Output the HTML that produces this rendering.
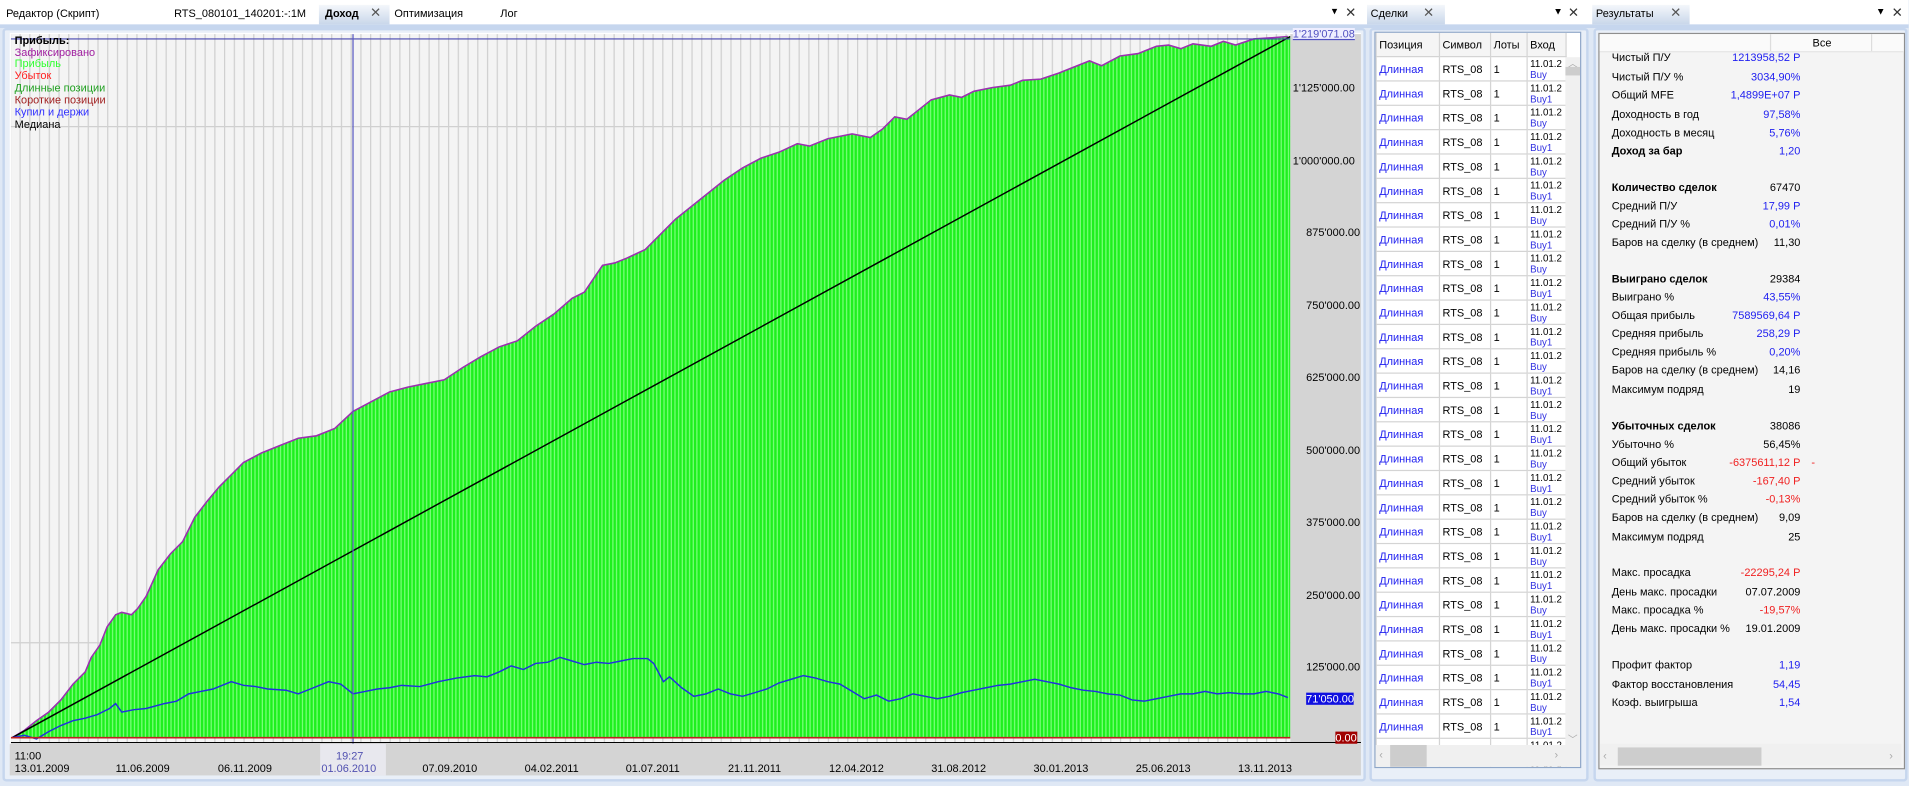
<!DOCTYPE html>
<html><head><meta charset="utf-8">
<style>
html,body{margin:0;padding:0;width:1909px;height:786px;overflow:hidden;background:#dfe8f5;}
#w{position:absolute;left:0;top:0;width:1568px;height:645px;transform:scale(1.2173);transform-origin:0 0;font-family:"Liberation Sans","DejaVu Sans",sans-serif;font-size:9px;color:#000;overflow:hidden;}
.a{position:absolute;white-space:nowrap;}
.tabbar{position:absolute;left:0;top:0;width:1568px;height:20px;background:#fff;border-bottom:3px solid #c6d6ee;}
.panel{position:absolute;background:#e9eff8;border:2px solid #c6d6ee;border-radius:3px;}
.tab{position:absolute;background:linear-gradient(#f4f7fb,#c9d7ea);height:16px;top:4px;}
table{border-collapse:collapse;}
.dt td{border:1px solid #d4d4d4;height:19px;padding:0 0 0 2px;vertical-align:middle;font-size:9px;line-height:10px;}
.dt td.p{color:#2020f0;}
.dt td.e{font-size:8px;line-height:9px;overflow:hidden;}
.dt td.e span{color:#3030e0;}
.r .a{font-size:9px;}
.b{color:#2020f0;}.rd{color:#f02020;}
</style></head><body><div id="w">
<div class="tabbar"></div>
<div class="a" style="left:5px;top:6px">Редактор (Скрипт)</div>
<div class="a" style="left:143px;top:6px">RTS_080101_140201:-:1M</div>
<div class="tab" style="left:262px;width:58px"></div>
<div class="a" style="left:267px;top:6px;font-weight:bold">Доход</div>
<div class="a" style="left:304px;top:4px;color:#555;font-size:11px">✕</div>
<div class="a" style="left:324px;top:6px">Оптимизация</div>
<div class="a" style="left:411px;top:6px">Лог</div>
<div class="a" style="left:1094px;top:4px;font-size:9px">▾</div>
<div class="a" style="left:1105px;top:4px;font-size:11px;color:#333">✕</div>

<div class="panel" style="left:2px;top:23px;width:1116px;height:615px;"></div>
<svg class="a" style="left:0;top:0" width="1120" height="640" viewBox="0 0 1120 640">
<defs>
<pattern id="g" x="8" y="0" width="8" height="10" patternUnits="userSpaceOnUse"><rect width="8" height="10" fill="#f4f4f4"/><rect x="0" width="1" height="10" fill="#cfcfcf"/></pattern>
<pattern id="gr" x="0" y="0" width="3" height="10" patternUnits="userSpaceOnUse"><rect width="3" height="10" fill="#1ef01e"/><rect x="2" width="1" height="10" fill="#7cff7c"/></pattern>
</defs>
<rect x="8" y="27" width="1110" height="585" fill="#fff"/>
<rect x="9" y="28" width="1051" height="582" fill="url(#g)"/>
<line x1="9" y1="104" x2="1060" y2="104" stroke="#d0d0d0"/>
<line x1="9" y1="528" x2="1060" y2="528" stroke="#d0d0d0"/>
<polygon fill="url(#gr)" points="10,606 20,600 30,592 40,585 50,575 60,562 70,552 75,540 82,530 88,515 95,505 100,503 108,505 113,500 120,490 130,468 140,455 150,445 160,425 170,412 180,400 190,390 200,380 215,372 230,366 245,360 260,358 275,352 290,338 305,330 320,322 335,318 350,315 365,312 380,302 395,293 410,285 425,280 440,268 455,258 470,245 480,240 495,218 505,216 515,212 530,205 545,190 555,180 565,172 580,160 595,148 610,138 625,130 640,125 655,118 665,120 680,114 700,110 715,113 725,106 735,96 745,98 755,90 765,82 780,78 790,80 800,75 815,72 830,70 840,66 855,65 870,60 880,56 895,50 905,54 920,46 935,44 950,38 960,37 970,40 980,36 995,38 1005,34 1015,37 1030,32 1045,31 1058,30 1060,30 1060,606"/>
<polyline fill="none" stroke="#9b30b0" stroke-width="1.3" points="10,606 20,600 30,592 40,585 50,575 60,562 70,552 75,540 82,530 88,515 95,505 100,503 108,505 113,500 120,490 130,468 140,455 150,445 160,425 170,412 180,400 190,390 200,380 215,372 230,366 245,360 260,358 275,352 290,338 305,330 320,322 335,318 350,315 365,312 380,302 395,293 410,285 425,280 440,268 455,258 470,245 480,240 495,218 505,216 515,212 530,205 545,190 555,180 565,172 580,160 595,148 610,138 625,130 640,125 655,118 665,120 680,114 700,110 715,113 725,106 735,96 745,98 755,90 765,82 780,78 790,80 800,75 815,72 830,70 840,66 855,65 870,60 880,56 895,50 905,54 920,46 935,44 950,38 960,37 970,40 980,36 995,38 1005,34 1015,37 1030,32 1045,31 1058,30"/>
<line x1="10" y1="606" x2="1060" y2="30" stroke="#000" stroke-width="1.2"/>
<polyline fill="none" stroke="#2030e0" stroke-width="1.2" points="10,606 20,604 30,607 40,601 50,596 60,592 70,590 80,587 90,582 95,578 100,585 110,583 120,582 135,578 145,576 155,570 165,568 175,566 190,560 200,563 210,564 220,566 235,567 245,570 255,566 270,560 280,562 290,570 300,568 310,566 320,565 330,563 345,564 360,560 375,557 390,555 400,556 410,552 420,547 430,550 440,545 450,544 460,540 470,543 480,546 490,544 500,545 510,543 520,541 532,541 537,545 545,560 550,556 560,565 570,572 580,570 590,566 600,570 610,572 620,569 630,566 640,561 650,558 660,555 670,557 680,560 690,562 700,568 710,574 720,571 730,576 740,574 750,570 760,572 770,574 780,572 790,569 800,567 810,565 820,563 830,562 840,560 850,558 860,560 870,562 880,565 890,567 900,568 910,570 920,571 930,575 940,576 950,574 960,572 970,570 980,570 990,568 1000,570 1010,569 1020,570 1030,570 1040,568 1050,570 1058,573"/>
<line x1="9" y1="32" x2="1060" y2="32" stroke="#4848b0"/>
<line x1="290" y1="28" x2="290" y2="612" stroke="#5858c0"/>
<line x1="9" y1="606" x2="1060" y2="606" stroke="#c02020" stroke-width="1.3"/>
<rect x="1060" y="28" width="58" height="582" fill="#d4d4d4"/>
<line x1="9" y1="610" x2="1118" y2="610" stroke="#000"/>
<rect x="8" y="611" width="1110" height="26" fill="#d4d4d4"/>
<rect x="263" y="611" width="54" height="26" fill="#e8e8ee"/>
</svg>
<div class="a" style="left:12px;top:28px;font-weight:bold">Прибыль:</div>
<div class="a" style="left:12px;top:38px;color:#a020a0">Зафиксировано</div>
<div class="a" style="left:12px;top:47px;color:#30ff30">Прибыль</div>
<div class="a" style="left:12px;top:57px;color:#ff2020">Убыток</div>
<div class="a" style="left:12px;top:67px;color:#20a020">Длинные позиции</div>
<div class="a" style="left:12px;top:77px;color:#a02020">Короткие позиции</div>
<div class="a" style="left:12px;top:87px;color:#3030ff">Купил и держи</div>
<div class="a" style="left:12px;top:97px;color:#000">Медиана</div>
<div class="a" style="left:1062px;top:23px;color:#5050c0;text-decoration:underline;background:#eef">1'219'071.08</div>
<div class="a" style="left:1062px;top:67px">1'125'000.00</div>
<div class="a" style="left:1062px;top:127px">1'000'000.00</div>
<div class="a" style="left:1073px;top:186px">875'000.00</div>
<div class="a" style="left:1073px;top:246px">750'000.00</div>
<div class="a" style="left:1073px;top:305px">625'000.00</div>
<div class="a" style="left:1073px;top:365px">500'000.00</div>
<div class="a" style="left:1073px;top:424px">375'000.00</div>
<div class="a" style="left:1073px;top:484px">250'000.00</div>
<div class="a" style="left:1073px;top:543px">125'000.00</div>
<div class="a" style="left:1073px;top:569px;background:#1010e0;color:#fff">71'050.00</div>
<div class="a" style="left:1097px;top:601px;background:#a00000;color:#fff">0.00</div>
<div class="a" style="left:12px;top:616px">11:00</div>
<div class="a" style="left:276px;top:616px;color:#5050b0">19:27</div>
<div class="a" style="left:12px;top:626px">13.01.2009</div>
<div class="a" style="left:95px;top:626px">11.06.2009</div>
<div class="a" style="left:179px;top:626px">06.11.2009</div>
<div class="a" style="left:264px;top:626px;color:#5050b0">01.06.2010</div>
<div class="a" style="left:347px;top:626px">07.09.2010</div>
<div class="a" style="left:431px;top:626px">04.02.2011</div>
<div class="a" style="left:514px;top:626px">01.07.2011</div>
<div class="a" style="left:598px;top:626px">21.11.2011</div>
<div class="a" style="left:681px;top:626px">12.04.2012</div>
<div class="a" style="left:765px;top:626px">31.08.2012</div>
<div class="a" style="left:849px;top:626px">30.01.2013</div>
<div class="a" style="left:933px;top:626px">25.06.2013</div>
<div class="a" style="left:1017px;top:626px">13.11.2013</div>

<div class="tab" style="left:1123px;width:64px"></div>
<div class="a" style="left:1126px;top:6px">Сделки</div>
<div class="a" style="left:1169px;top:4px;color:#555;font-size:11px">✕</div>
<div class="a" style="left:1276px;top:5px;font-size:8px">▼</div>
<div class="a" style="left:1288px;top:4px;font-size:11px;color:#333">✕</div>
<div class="panel" style="left:1125px;top:23px;width:176px;height:615px;"></div>
<div class="a" style="left:1129px;top:26px;width:168px;height:603px;background:#fff;border:1px solid #8ea6c8;overflow:hidden">
<table class="dt" style="width:156px;table-layout:fixed">
<col style="width:52px"><col style="width:42px"><col style="width:30px"><col style="width:32px">
<tr><td style="background:#f5f5f5;border-top:0">Позиция</td><td style="background:#f5f5f5;border-top:0">Символ</td><td style="background:#f5f5f5;border-top:0">Лоты</td><td style="background:#f5f5f5;border-top:0">Вход</td></tr>
<tr><td class="p">Длинная</td><td>RTS_08</td><td>1</td><td class="e">11.01.2<br><span>Buy</span></td></tr>
<tr><td class="p">Длинная</td><td>RTS_08</td><td>1</td><td class="e">11.01.2<br><span>Buy1</span></td></tr>
<tr><td class="p">Длинная</td><td>RTS_08</td><td>1</td><td class="e">11.01.2<br><span>Buy</span></td></tr>
<tr><td class="p">Длинная</td><td>RTS_08</td><td>1</td><td class="e">11.01.2<br><span>Buy1</span></td></tr>
<tr><td class="p">Длинная</td><td>RTS_08</td><td>1</td><td class="e">11.01.2<br><span>Buy</span></td></tr>
<tr><td class="p">Длинная</td><td>RTS_08</td><td>1</td><td class="e">11.01.2<br><span>Buy1</span></td></tr>
<tr><td class="p">Длинная</td><td>RTS_08</td><td>1</td><td class="e">11.01.2<br><span>Buy</span></td></tr>
<tr><td class="p">Длинная</td><td>RTS_08</td><td>1</td><td class="e">11.01.2<br><span>Buy1</span></td></tr>
<tr><td class="p">Длинная</td><td>RTS_08</td><td>1</td><td class="e">11.01.2<br><span>Buy</span></td></tr>
<tr><td class="p">Длинная</td><td>RTS_08</td><td>1</td><td class="e">11.01.2<br><span>Buy1</span></td></tr>
<tr><td class="p">Длинная</td><td>RTS_08</td><td>1</td><td class="e">11.01.2<br><span>Buy</span></td></tr>
<tr><td class="p">Длинная</td><td>RTS_08</td><td>1</td><td class="e">11.01.2<br><span>Buy1</span></td></tr>
<tr><td class="p">Длинная</td><td>RTS_08</td><td>1</td><td class="e">11.01.2<br><span>Buy</span></td></tr>
<tr><td class="p">Длинная</td><td>RTS_08</td><td>1</td><td class="e">11.01.2<br><span>Buy1</span></td></tr>
<tr><td class="p">Длинная</td><td>RTS_08</td><td>1</td><td class="e">11.01.2<br><span>Buy</span></td></tr>
<tr><td class="p">Длинная</td><td>RTS_08</td><td>1</td><td class="e">11.01.2<br><span>Buy1</span></td></tr>
<tr><td class="p">Длинная</td><td>RTS_08</td><td>1</td><td class="e">11.01.2<br><span>Buy</span></td></tr>
<tr><td class="p">Длинная</td><td>RTS_08</td><td>1</td><td class="e">11.01.2<br><span>Buy1</span></td></tr>
<tr><td class="p">Длинная</td><td>RTS_08</td><td>1</td><td class="e">11.01.2<br><span>Buy</span></td></tr>
<tr><td class="p">Длинная</td><td>RTS_08</td><td>1</td><td class="e">11.01.2<br><span>Buy1</span></td></tr>
<tr><td class="p">Длинная</td><td>RTS_08</td><td>1</td><td class="e">11.01.2<br><span>Buy</span></td></tr>
<tr><td class="p">Длинная</td><td>RTS_08</td><td>1</td><td class="e">11.01.2<br><span>Buy1</span></td></tr>
<tr><td class="p">Длинная</td><td>RTS_08</td><td>1</td><td class="e">11.01.2<br><span>Buy</span></td></tr>
<tr><td class="p">Длинная</td><td>RTS_08</td><td>1</td><td class="e">11.01.2<br><span>Buy1</span></td></tr>
<tr><td class="p">Длинная</td><td>RTS_08</td><td>1</td><td class="e">11.01.2<br><span>Buy</span></td></tr>
<tr><td class="p">Длинная</td><td>RTS_08</td><td>1</td><td class="e">11.01.2<br><span>Buy1</span></td></tr>
<tr><td class="p">Длинная</td><td>RTS_08</td><td>1</td><td class="e">11.01.2<br><span>Buy</span></td></tr>
<tr><td class="p">Длинная</td><td>RTS_08</td><td>1</td><td class="e">11.01.2<br><span>Buy1</span></td></tr>
<tr><td class="p">Длинная</td><td>RTS_08</td><td>1</td><td class="e">11.01.2<br><span>Buy</span></td></tr>
<tr><td class="p">Длинная</td><td>RTS_08</td><td>1</td><td class="e">11.01.2<br><span>Buy1</span></td></tr>
</table>
<div class="a" style="left:156px;top:20px;width:12px;height:565px;background:#f0f0f0"></div>
<div class="a" style="left:158px;top:20px;color:#aaa;font-size:8px">︿</div>
<div class="a" style="left:156px;top:28px;width:12px;height:7px;background:#cdcdcd"></div>
<div class="a" style="left:158px;top:575px;color:#aaa;font-size:8px">﹀</div>
<div class="a" style="left:0;top:585px;width:168px;height:18px;background:#f0f0f0"></div>
<div class="a" style="left:12px;top:585px;width:30px;height:18px;background:#cdcdcd"></div>
<div class="a" style="left:3px;top:588px;color:#aaa">‹</div>
<div class="a" style="left:147px;top:588px;color:#aaa">›</div>
</div>

<div class="tab" style="left:1308px;width:80px"></div>
<div class="a" style="left:1311px;top:6px">Результаты</div>
<div class="a" style="left:1372px;top:4px;color:#555;font-size:11px">✕</div>
<div class="a" style="left:1541px;top:5px;font-size:8px">▼</div>
<div class="a" style="left:1554px;top:4px;font-size:11px;color:#333">✕</div>
<div class="panel" style="left:1309px;top:23px;width:254px;height:615px;"></div>
<div class="a r" style="left:1313px;top:27px;width:250px;height:603px;background:#f4f4f4;border:1px solid #8e8e8e;overflow:hidden">
<div class="a" style="left:0;top:0;width:250px;height:14px;background:#fafafa;border-bottom:1px solid #e4e4e4"></div>
<div class="a" style="left:140px;top:0;width:1px;height:14px;background:#ddd"></div>
<div class="a" style="left:223px;top:0;width:1px;height:14px;background:#ddd"></div>
<div class="a" style="left:175px;top:2px">Все</div>
</div>
<div class="a r" style="left:1313px;top:27px;width:250px;height:603px;overflow:hidden">
<div class="a" style="left:11px;top:15px">Чистый П/У</div><div class="a b" style="right:84px;top:15px">1213958,52 Р</div>
<div class="a" style="left:11px;top:31px">Чистый П/У %</div><div class="a b" style="right:84px;top:31px">3034,90%</div>
<div class="a" style="left:11px;top:46px">Общий MFE</div><div class="a b" style="right:84px;top:46px">1,4899E+07 Р</div>
<div class="a" style="left:11px;top:62px">Доходность в год</div><div class="a b" style="right:84px;top:62px">97,58%</div>
<div class="a" style="left:11px;top:77px">Доходность в месяц</div><div class="a b" style="right:84px;top:77px">5,76%</div>
<div class="a" style="left:11px;top:92px;font-weight:bold">Доход за бар</div><div class="a b" style="right:84px;top:92px">1,20</div>
<div class="a" style="left:11px;top:122px;font-weight:bold">Количество сделок</div><div class="a" style="right:84px;top:122px">67470</div>
<div class="a" style="left:11px;top:137px">Средний П/У</div><div class="a b" style="right:84px;top:137px">17,99 Р</div>
<div class="a" style="left:11px;top:152px">Средний П/У %</div><div class="a b" style="right:84px;top:152px">0,01%</div>
<div class="a" style="left:11px;top:167px">Баров на сделку (в среднем)</div><div class="a" style="right:84px;top:167px">11,30</div>
<div class="a" style="left:11px;top:197px;font-weight:bold">Выиграно сделок</div><div class="a" style="right:84px;top:197px">29384</div>
<div class="a" style="left:11px;top:212px">Выиграно %</div><div class="a b" style="right:84px;top:212px">43,55%</div>
<div class="a" style="left:11px;top:227px">Общая прибыль</div><div class="a b" style="right:84px;top:227px">7589569,64 Р</div>
<div class="a" style="left:11px;top:242px">Средняя прибыль</div><div class="a b" style="right:84px;top:242px">258,29 Р</div>
<div class="a" style="left:11px;top:257px">Средняя прибыль %</div><div class="a b" style="right:84px;top:257px">0,20%</div>
<div class="a" style="left:11px;top:272px">Баров на сделку (в среднем)</div><div class="a" style="right:84px;top:272px">14,16</div>
<div class="a" style="left:11px;top:288px">Максимум подряд</div><div class="a" style="right:84px;top:288px">19</div>
<div class="a" style="left:11px;top:318px;font-weight:bold">Убыточных сделок</div><div class="a" style="right:84px;top:318px">38086</div>
<div class="a" style="left:11px;top:333px">Убыточно %</div><div class="a" style="right:84px;top:333px">56,45%</div>
<div class="a" style="left:11px;top:348px">Общий убыток</div><div class="a rd" style="right:84px;top:348px">-6375611,12 Р</div><div class="a rd" style="right:72px;top:348px">-</div>
<div class="a" style="left:11px;top:363px">Средний убыток</div><div class="a rd" style="right:84px;top:363px">-167,40 Р</div>
<div class="a" style="left:11px;top:378px">Средний убыток %</div><div class="a rd" style="right:84px;top:378px">-0,13%</div>
<div class="a" style="left:11px;top:393px">Баров на сделку (в среднем)</div><div class="a" style="right:84px;top:393px">9,09</div>
<div class="a" style="left:11px;top:409px">Максимум подряд</div><div class="a" style="right:84px;top:409px">25</div>
<div class="a" style="left:11px;top:438px">Макс. просадка</div><div class="a rd" style="right:84px;top:438px">-22295,24 Р</div>
<div class="a" style="left:11px;top:454px">День макс. просадки</div><div class="a" style="right:84px;top:454px">07.07.2009</div>
<div class="a" style="left:11px;top:469px">Макс. просадка %</div><div class="a rd" style="right:84px;top:469px">-19,57%</div>
<div class="a" style="left:11px;top:484px">День макс. просадки %</div><div class="a" style="right:84px;top:484px">19.01.2009</div>
<div class="a" style="left:11px;top:514px">Профит фактор</div><div class="a b" style="right:84px;top:514px">1,19</div>
<div class="a" style="left:11px;top:530px">Фактор восстановления</div><div class="a b" style="right:84px;top:530px">54,45</div>
<div class="a" style="left:11px;top:545px">Коэф. выигрыша</div><div class="a b" style="right:84px;top:545px">1,54</div>
<div class="a" style="left:1px;top:584px;width:248px;height:18px;background:#f0f0f0"></div>
<div class="a" style="left:16px;top:587px;width:118px;height:15px;background:#cdcdcd"></div>
<div class="a" style="left:4px;top:589px;color:#aaa">‹</div>
<div class="a" style="left:239px;top:589px;color:#aaa">›</div>
</div>
</div></body></html>
